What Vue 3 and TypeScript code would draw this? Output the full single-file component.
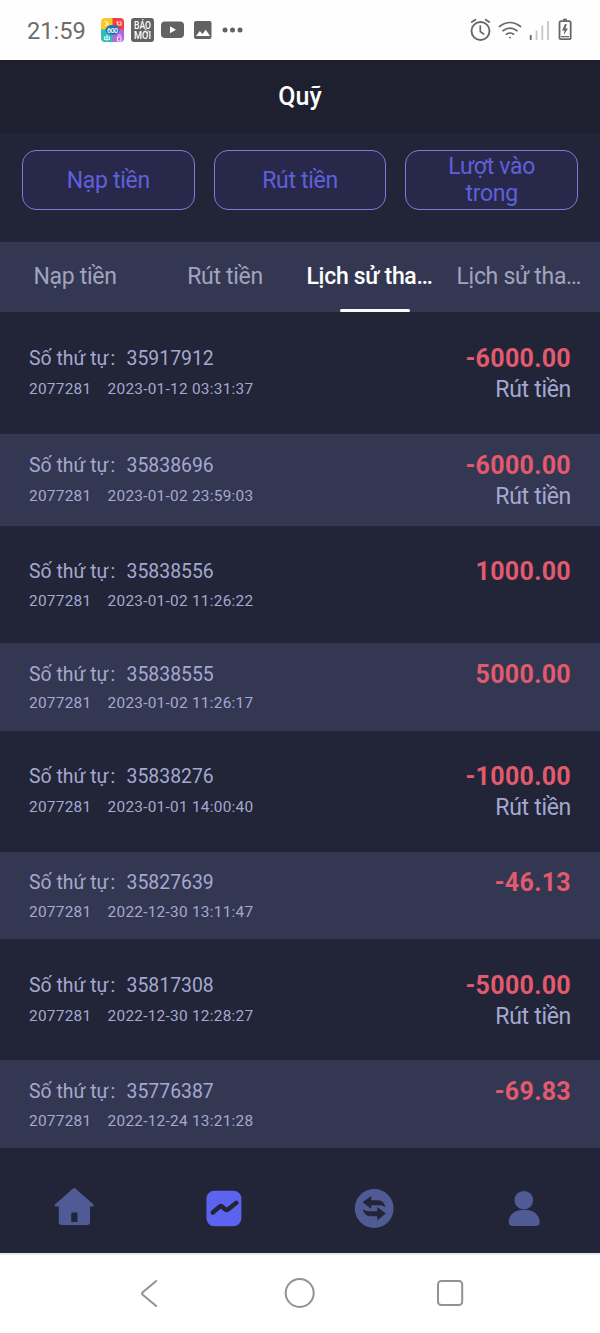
<script setup lang="ts">
interface Entry {
  order: string
  date: string
  amount: string
  note?: string
}

const actions: string[] = ['Nạp tiền', 'Rút tiền', 'Lượt vào trong']
const tabs: string[] = ['Nạp tiền', 'Rút tiền', 'Lịch sử tha…', 'Lịch sử tha…']
const activeTab = 2
const account = '2077281'

const entries: Entry[] = [
  { order: '35917912', date: '2023-01-12 03:31:37', amount: '-6000.00', note: 'Rút tiền' },
  { order: '35838696', date: '2023-01-02 23:59:03', amount: '-6000.00', note: 'Rút tiền' },
  { order: '35838556', date: '2023-01-02 11:26:22', amount: '1000.00' },
  { order: '35838555', date: '2023-01-02 11:26:17', amount: '5000.00' },
  { order: '35838276', date: '2023-01-01 14:00:40', amount: '-1000.00', note: 'Rút tiền' },
  { order: '35827639', date: '2022-12-30 13:11:47', amount: '-46.13' },
  { order: '35817308', date: '2022-12-30 12:28:27', amount: '-5000.00', note: 'Rút tiền' },
  { order: '35776387', date: '2022-12-24 13:21:28', amount: '-69.83' },
]
</script>

<template>
  <div class="screen">
    <div class="status">
      <span class="clock">21:59</span>
      <svg class="app-icons" width="150" height="26" viewBox="0 0 150 26">
        <defs>
          <clipPath id="appTile"><rect x="1" y="1" width="23" height="24" rx="4" /></clipPath>
        </defs>
        <g clip-path="url(#appTile)">
          <rect x="1" y="1" width="12" height="12" fill="#f8c928" />
          <rect x="12.5" y="1" width="12" height="12" fill="#f43d45" />
          <rect x="1" y="12.5" width="12" height="13" fill="#2fbdb5" />
          <rect x="12.5" y="12.5" width="12" height="13" fill="#b566dc" />
          <path d="M5 4l3 3-3 2M17 5h4v3h-3zM7 18v6M4.500 20h5v2.500h-5zM18 18h3M17.500 20h3.500v4h-3.500z" fill="none" stroke="#fff" stroke-opacity=".8" stroke-width="1.200" />
          <ellipse cx="12.500" cy="13" rx="7" ry="5" fill="#1976b8" />
        </g>
        <text x="12.500" y="15.600" class="tile-text" font-size="7" textLength="11">600</text>
        <rect x="31" y="1" width="23" height="24" rx="3" fill="#626262" />
        <text x="42.500" y="12" class="tile-text" font-size="10" textLength="17" lengthAdjust="spacingAndGlyphs">BÁO</text>
        <text x="42.500" y="21.500" class="tile-text" font-size="10" textLength="17" lengthAdjust="spacingAndGlyphs">MỚI</text>
        <rect x="61" y="4.500" width="23" height="16.500" rx="4" fill="#626262" />
        <path d="M70 9.300v7l6-3.500z" fill="#fff" />
        <rect x="94" y="4" width="17.500" height="18" rx="2" fill="#626262" />
        <path d="M96 19l3.800-5 2.700 3 3.300-4.200 4.200 6.200z" fill="#fff" />
        <g fill="#626262">
          <circle cx="125" cy="13" r="2.500" /><circle cx="132.500" cy="13" r="2.500" /><circle cx="140" cy="13" r="2.500" />
        </g>
      </svg>
      <svg class="system-icons" width="106" height="26" viewBox="0 0 106 26">
        <g fill="none" stroke="#686868" stroke-linecap="round">
          <circle cx="12.500" cy="14" r="9" stroke-width="1.900" />
          <path d="M12.300 9v5.500l3.400 2.600" stroke-width="1.700" />
          <path d="M3.800 5l3.500-2.300M21.200 5l-3.500-2.300" stroke-width="1.800" />
          <path d="M31.500 9.500q10.500-8 21 0M35 13.700q7-5.300 14 0M38.500 17.200q3.500-2.400 7 0" stroke-width="1.700" />
        </g>
        <circle cx="42" cy="20.500" r="1" fill="#777" />
        <path d="M62.700 18v5" stroke="#666" stroke-width="1.800" />
        <path d="M68.500 13.500V23M74.300 8.500V23M80 4V23" stroke="#c6c6c6" stroke-width="1.800" />
        <path d="M95 2.700h4" stroke="#686868" stroke-width="2" />
        <rect x="91.500" y="4.200" width="11.200" height="18" rx="1.800" fill="none" stroke="#686868" stroke-width="1.800" />
        <path d="M97 7l-3 6.500h2.600l-.8 4.500 4.200-6.600h-2.500l1.300-4.400zM93 19h8v1.300h-8z" fill="#686868" />
      </svg>
    </div>

    <header class="title">Quỹ</header>

    <div class="actions">
      <button v-for="label in actions" :key="label" class="action" type="button">{{ label }}</button>
    </div>

    <nav class="tabs">
      <div v-for="(tab, i) in tabs" :key="i" class="tab" :class="{ active: i === activeTab, long: tab.endsWith('…') }">
        <span>{{ tab }}</span>
      </div>
    </nav>

    <main class="list">
      <article v-for="entry in entries" :key="entry.order" class="entry" :class="{ noted: entry.note }">
        <div class="order"><span>Số thứ tự</span><span class="colon">:</span><span>{{ entry.order }}</span></div>
        <div class="amount">{{ entry.amount }}</div>
        <div class="meta"><span>{{ account }}</span><span>{{ entry.date }}</span></div>
        <div class="note">{{ entry.note }}</div>
      </article>
    </main>

    <nav class="bottom">
      <div class="slot">
        <svg width="40" height="40" viewBox="0 1 40 40">
          <path fill="#505a94" fill-rule="evenodd" d="M19 1.600q1.200-1.200 2.400 0L39.300 17.300q1.300 1.800-.7 2.200H36V35q0 3-3 3H7.800q-3 0-3-3V19.500H1.900q-2-.4-.7-2.200zM18.200 25.600q-1 0-1 1V35h6.300V26.600q0-1-1-1z" />
        </svg>
      </div>
      <div class="slot">
        <svg width="40" height="40" viewBox="0 0 40 40">
          <rect x="2.400" y="2.700" width="35" height="35.600" rx="8" fill="#5c63ee" />
          <path d="M8.800 24.500l7-6q1.400-1 2.600.3l3 2.700q1.200 1 2.500 0l8.500-6.700" fill="none" stroke="#212537" stroke-width="4.500" stroke-linecap="round" stroke-linejoin="round" />
        </svg>
      </div>
      <div class="slot">
        <svg width="40" height="40" viewBox="0 0 40 40">
          <circle cx="20.200" cy="20.500" r="19.400" fill="#505a94" />
          <path fill="#212537" d="M8.600 14.300L17.200 8v4.300h7q6 .3 7.300 7-2.700-2.100-6-2.100h-8.300v3.800zM31.800 25.600l-8.600 6.800v-4.200h-7q-6-.3-7.300-7.300 2.700 2.300 6 2.300h8.300v-4.200z" />
        </svg>
      </div>
      <div class="slot">
        <svg width="40" height="40" viewBox="0 0 40 40">
          <circle cx="19.800" cy="12.200" r="9.300" fill="#505a94" />
          <path d="M4.700 34c0-7 6-12 13-12h5c7 0 13 5 13 12q0 4-4 4h-23q-4 0-4-4z" fill="#505a94" />
        </svg>
      </div>
    </nav>

    <footer class="system">
      <div class="slot">
        <svg width="32" height="32" viewBox="0 0 32 32"><path d="M22.200 4L8.700 15.300q-1.200 1.200 0 2.400L22.200 29" class="outline" /></svg>
      </div>
      <div class="slot">
        <svg width="32" height="32" viewBox="0 0 32 32"><circle cx="15.700" cy="16" r="14" class="outline" /></svg>
      </div>
      <div class="slot">
        <svg width="32" height="32" viewBox="0 0 32 32"><rect x="4" y="4" width="24.200" height="24" rx="3.300" class="outline" /></svg>
      </div>
    </footer>
  </div>
</template>

<style>
body {
  margin: 0;
}
</style>

<style scoped>
.screen {
  width: 600px;
  height: 1333px;
  display: flex;
  flex-direction: column;
  overflow: hidden;
  background: #212537;
  font-family: Roboto, "Liberation Sans", sans-serif;
}
.status {
  height: 60px;
  flex: none;
  display: flex;
  align-items: center;
  background: #fefefe;
  padding: 0 26px 0 27px;
  box-sizing: border-box;
}
.clock {
  width: 73px;
  font-size: 23.600px;
  line-height: 30px;
  color: #6c6c6c;
  padding-top: 2px;
  box-sizing: border-box;
}
.system-icons {
  margin-left: auto;
}
.tile-text {
  fill: #fff;
  font-weight: 500;
  text-anchor: middle;
}
.title {
  height: 73px;
  flex: none;
  background: #1e2030;
  color: #fff;
  text-align: center;
  font-size: 25px;
  font-weight: 500;
  line-height: 74px;
}
.actions {
  height: 109.400px;
  flex: none;
  display: flex;
  gap: 19px;
  padding: 17px 22px 0;
  box-sizing: border-box;
}
.action {
  flex: 1 1 0;
  height: 60px;
  padding: 0 30px;
  box-sizing: border-box;
  border: 1px solid #7a7cd6;
  border-radius: 14px;
  background: #28294a;
  color: #5e60dc;
  font-family: inherit;
  font-size: 23px;
  letter-spacing: -.3px;
  line-height: 27px;
}
.tabs {
  height: 70px;
  flex: none;
  display: grid;
  grid-template-columns: repeat(4, 150px);
  background: #343751;
  line-height: 70px;
  font-size: 23px;
  letter-spacing: -.3px;
  color: #a1a3bf;
}
.tab {
  white-space: nowrap;
  display: flex;
  flex-direction: column;
  align-items: center;
}
.long span {
  align-self: flex-start;
  padding-left: 6.500px;
}
.active {
  color: #fff;
  font-weight: 500;
}
.active::after {
  content: "";
  width: 70px;
  height: 3.500px;
  margin-top: -3.500px;
  border-radius: 2px;
  background: #f8f9ff;
}
.list {
  flex: none;
}
.entry {
  display: grid;
  grid-template-columns: 1fr auto;
  grid-template-rows: 30px 28px;
  align-items: center;
  padding: 30.700px 29px 28.300px;
  color: #a5a8d0;
}
.entry:first-child {
  padding-bottom: 29px;
}
.entry.noted {
  grid-template-rows: 30px 32px;
}
.entry:nth-child(even) {
  padding: 16.200px 29px 13.600px;
  background: #343751;
}
.order {
  display: flex;
  font-size: 19.400px;
}
.colon {
  width: 18px;
  padding-left: 2px;
  box-sizing: border-box;
}
.amount {
  justify-self: end;
  color: #e25a6d;
  font-size: 25px;
  font-weight: 700;
  letter-spacing: .3px;
}
.meta {
  display: flex;
  gap: 16.200px;
  font-size: 15.400px;
  letter-spacing: .26px;
}
.note {
  justify-self: end;
  font-size: 23px;
  letter-spacing: -.3px;
}
.bottom {
  flex: 1;
  display: grid;
  grid-template-columns: repeat(4, 1fr);
  padding-top: 40px;
  box-sizing: border-box;
}
.slot {
  display: flex;
  justify-content: center;
}
.bottom .slot {
  padding-right: 2px;
}
.system {
  height: 80px;
  flex: none;
  display: grid;
  grid-template-columns: repeat(3, 150px);
  justify-content: center;
  align-items: center;
  background: #fff;
  border-top: 2px solid #e8e8f4;
  box-sizing: border-box;
  padding-bottom: 2px;
}
.outline {
  fill: none;
  stroke: #929292;
  stroke-width: 2;
  stroke-linecap: round;
  stroke-linejoin: round;
}
</style>
